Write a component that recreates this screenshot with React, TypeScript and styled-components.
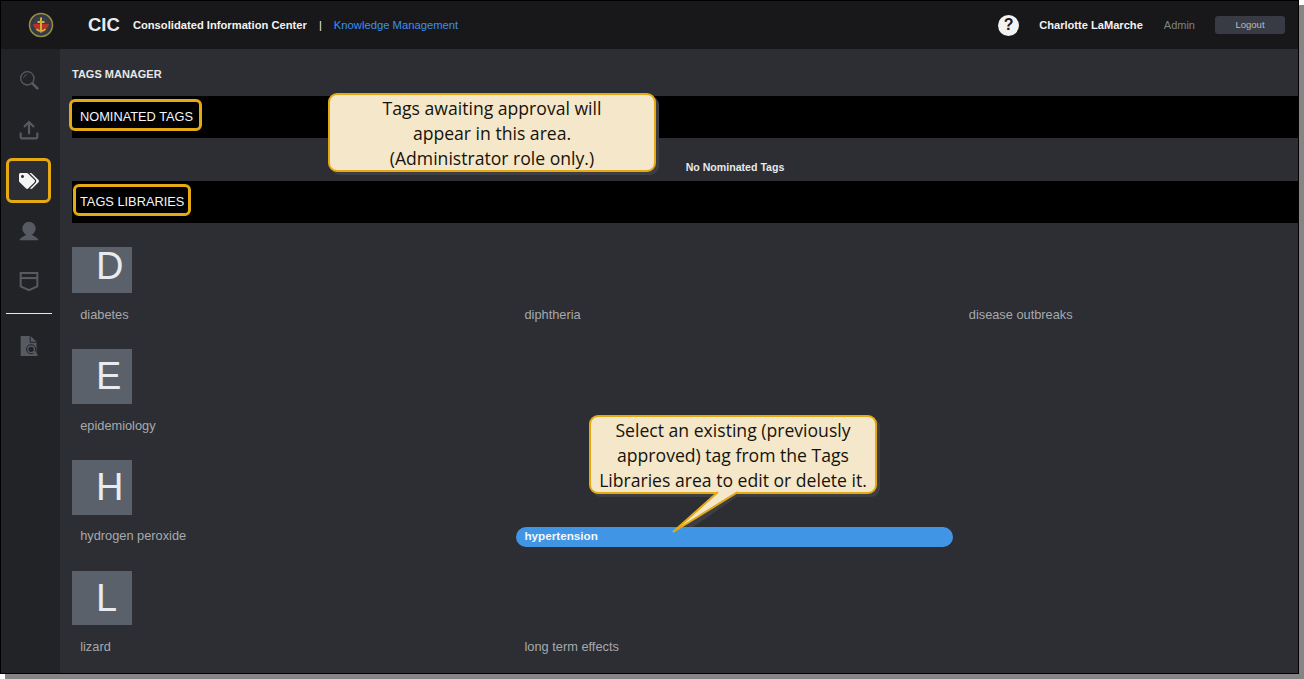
import React from 'react';
import styled, { createGlobalStyle } from 'styled-components';
import { FaTags } from 'react-icons/fa';

const GlobalStyle = createGlobalStyle`
  html, body {
    margin: 0;
    padding: 0;
    background: #ffffff;
    font-family: "Liberation Sans", Arial, sans-serif;
  }
`;

const Page = styled.div`
  position: relative;
  width: 1304px;
  height: 679px;
  overflow: hidden;

  /* the screenshot's drop shadow */
  &::before {
    content: '';
    position: absolute;
    left: 5px;
    top: 5px;
    width: 1299px;
    height: 674px;
    background: #858585;
  }
`;

const Frame = styled.div`
  position: relative;
  box-sizing: border-box;
  width: 1299px;
  height: 674px;
  border: 1px solid #000;
  display: flex;
  flex-direction: column;
`;

const Header = styled.header`
  flex: 0 0 48px;
  background: #18181a;
  display: flex;
  align-items: center;
  color: #f2f2f2;
`;

const Seal = styled.svg`
  width: 26px;
  height: 26px;
  margin-left: 27px;
`;

const Brand = styled.span`
  margin-left: 34px;
  font-size: 18.5px;
  font-weight: 700;
  color: #e8ebef;
`;

const AppName = styled.span`
  margin-left: 13px;
  font-size: 11.2px;
  font-weight: 700;
`;

const Divider = styled.span`
  margin-left: 12px;
  font-size: 11px;
`;

const Module = styled.span`
  margin-left: 12px;
  font-size: 11.25px;
  color: #3b8ff0;
`;

const HeaderRight = styled.div`
  margin-left: auto;
  display: flex;
  align-items: center;
  padding-right: 13px;
`;

const Help = styled.span`
  width: 21px;
  height: 21px;
  border-radius: 50%;
  background: #f2f2f2;
  color: #18181a;
  font-size: 16px;
  font-weight: 700;
  display: flex;
  align-items: center;
  justify-content: center;
`;

const UserName = styled.span`
  margin-left: 20px;
  font-size: 11.1px;
  font-weight: 700;
`;

const Role = styled.span`
  margin-left: 21px;
  font-size: 11px;
  color: #7f8184;
`;

const Logout = styled.button`
  margin-left: 20px;
  width: 70px;
  height: 18px;
  padding: 0 0 1px;
  border: 0;
  border-radius: 3px;
  background: #393b44;
  color: #b9bbbf;
  font-family: inherit;
  font-size: 9.5px;
`;

const Body = styled.div`
  flex: 1;
  min-height: 0;
  display: flex;
`;

const Sidebar = styled.nav`
  flex: 0 0 59px;
  background: #222327;
  display: flex;
  flex-direction: column;
  align-items: center;
  padding: 10px 4px 0 0;
  box-sizing: border-box;
`;

const NavItem = styled.div<{ $active?: boolean }>`
  width: ${p => (p.$active ? '45px' : '44px')};
  height: ${p => (p.$active ? '45px' : '44px')};
  margin: ${p => (p.$active ? '-1px 0 7px' : '0 0 6px')};
  padding-bottom: ${p => (p.$active ? '0' : '2px')};
  box-sizing: border-box;
  border-radius: 6px;
  display: flex;
  align-items: center;
  justify-content: center;
  color: ${p => (p.$active ? '#f4f4f4' : '#575a61')};
  background: ${p => (p.$active ? '#2d2e33' : 'transparent')};
  border: ${p => (p.$active ? '3px solid #e5a913' : '0')};

  svg {
    width: 20px;
    height: 20px;
    display: block;
  }
`;

const NavRule = styled.hr`
  width: 46px;
  height: 1px;
  margin: 3px 0 11px;
  border: 0;
  background: #e8e8e8;
`;

const Main = styled.main`
  flex: 1;
  min-width: 0;
  background: #2d2e33;
  padding: 19px 0 0 12px;
  overflow: hidden;
`;

const PageTitle = styled.h1`
  margin: 0 0 15px;
  font-size: 11px;
  line-height: 13px;
  font-weight: 700;
  color: #e6e8ea;
`;

const SectionBar = styled.div`
  height: 42px;
  padding: 0 0 1px 8px;
  box-sizing: border-box;
  background: #000;
  display: flex;
  align-items: center;
`;

const SectionTitle = styled.h2`
  position: relative;
  margin: 0;
  font-size: 12.8px;
  line-height: 16px;
  font-weight: 400;
  color: #f4f6f8;
`;

const Highlight = styled.span<{ $left: number; $right: number }>`
  position: absolute;
  top: -9.5px;
  bottom: -6.5px;
  left: ${p => p.$left}px;
  right: ${p => p.$right}px;
  border: 3px solid #e5a913;
  border-radius: 6px;
`;

const EmptyNote = styled.div`
  height: 43px;
  display: flex;
  align-items: flex-end;
  justify-content: center;
  padding: 0 0 8px 100px;
  box-sizing: border-box;
  font-size: 10.6px;
  font-weight: 700;
  color: #e8e8e8;
`;

const Letter = styled.div<{ $height: number; $gap: number; $line: number }>`
  width: 60px;
  height: ${p => p.$height}px;
  margin-top: ${p => p.$gap}px;
  background: #5a616a;
  color: #e8ebef;
  font-size: 38px;
  line-height: ${p => p.$line}px;
  padding-left: 24px;
  box-sizing: border-box;
`;

const TagGrid = styled.div<{ $gap: number }>`
  display: grid;
  grid-template-columns: repeat(3, 444.3px);
  margin-top: ${p => p.$gap}px;
`;

const Tag = styled.div`
  width: 437px;
  height: 20px;
  line-height: 20px;
  padding-left: 8.2px;
  box-sizing: border-box;
  font-size: 12.8px;
  color: #a6a9ad;
`;

const SelectedTag = styled(Tag)`
  margin-top: 1px;
  line-height: 17px;
  border-radius: 10px;
  font-size: 11.7px;
  font-weight: 700;
  color: #f2f6fb;
  background: #4095e5;
`;

const Callout = styled.div<{ $x: number; $y: number; $w: number }>`
  position: absolute;
  left: ${p => p.$x}px;
  top: ${p => p.$y}px;
  width: ${p => p.$w}px;
  height: 79px;
  padding-top: 1px;
  box-sizing: border-box;
  border: 2px solid #e5a913;
  border-radius: 9px;
  background: #f5e7c9;
  box-shadow: 3px 3px 0 #3d3e43;
  color: #17130c;
  font-family: "Open Sans", "Noto Sans", sans-serif;
  font-size: 17.6px;
  line-height: 25px;
  text-align: center;
  white-space: nowrap;
  z-index: 2;
`;

const Tail = styled.svg`
  position: absolute;
  left: 667px;
  top: 490px;
  width: 80px;
  height: 48px;
  z-index: 3;
`;

function SealIcon() {
  return (
    <Seal viewBox="0 0 26 26">
      <circle cx="13" cy="13" r="11.500" fill="#2f3a4a" stroke="#9a8f3e" strokeWidth="1.500" />
      <circle cx="13" cy="13" r="8.500" fill="#3c3f3f" />
      <path d="M4.800 12h16.400a8.500 8.500 0 0 1-16.400 0z" fill="#b5342a" />
      <path d="M13 5.500v15M9.500 10h7M8.500 17c2 2.500 7 2.500 9 0" stroke="#d6ad3c" strokeWidth="2" fill="none" />
    </Seal>
  );
}

function SearchIcon() {
  return (
    <svg viewBox="0 0 24 24" fill="none" stroke="currentColor">
      <circle cx="10" cy="10" r="8" strokeWidth="1.600" />
      <path d="M5.500 10a4.500 4.500 0 0 1 4.500-4.500" strokeWidth="1" />
      <path d="M16 16 L22 22" strokeWidth="3.200" strokeLinecap="round" />
    </svg>
  );
}

function UploadIcon() {
  return (
    <svg viewBox="0 0 24 24" fill="none" stroke="currentColor" strokeWidth="2.600">
      <path d="M12 17V3M6 8.500 12 2.500 18 8.500" />
      <path d="M2 15v5.500a1.500 1.500 0 0 0 1.500 1.500h17a1.500 1.500 0 0 0 1.500-1.500V15" />
    </svg>
  );
}

function UserIcon() {
  return (
    <svg viewBox="0 0 24 24" fill="currentColor">
      <circle cx="12" cy="9" r="8" />
      <path d="M9 15h6c.5 3 7 4 8.500 8H.5C2 19 8.500 18 9 15z" />
    </svg>
  );
}

function PocketIcon() {
  return (
    <svg viewBox="0 0 24 24" fill="none" stroke="currentColor" strokeWidth="2.400">
      <path d="M2 2.500h20v16L12 23 2 18.500z" />
      <path d="M2 8.500h20" />
    </svg>
  );
}

function FileSearchIcon() {
  return (
    <svg viewBox="0 0 24 24">
      <path fill="currentColor" d="M2 0H14l7 7v17H2z" />
      <path fill="#222327" d="M14 0v7h7v1.200h-8.200V0z" />
      <circle cx="14.500" cy="16" r="6" fill="#222327" />
      <circle cx="14.500" cy="16" r="4" fill="none" stroke="currentColor" strokeWidth="1.600" />
      <path d="M17.500 19 22 23.500" stroke="currentColor" strokeWidth="2.200" />
    </svg>
  );
}

export default function App() {
  return (
    <Page>
      <GlobalStyle />
      <Frame>
        <Header>
          <SealIcon />
          <Brand>CIC</Brand>
          <AppName>Consolidated Information Center</AppName>
          <Divider>|</Divider>
          <Module>Knowledge Management</Module>
          <HeaderRight>
            <Help>?</Help>
            <UserName>Charlotte LaMarche</UserName>
            <Role>Admin</Role>
            <Logout>Logout</Logout>
          </HeaderRight>
        </Header>
        <Body>
          <Sidebar>
            <NavItem><SearchIcon /></NavItem>
            <NavItem><UploadIcon /></NavItem>
            <NavItem $active><FaTags /></NavItem>
            <NavItem><UserIcon /></NavItem>
            <NavItem><PocketIcon /></NavItem>
            <NavRule />
            <NavItem><FileSearchIcon /></NavItem>
          </Sidebar>
          <Main>
            <PageTitle>TAGS MANAGER</PageTitle>
            <SectionBar>
              <SectionTitle>
                NOMINATED TAGS
                <Highlight $left={-11} $right={-9} />
              </SectionTitle>
            </SectionBar>
            <EmptyNote>No Nominated Tags</EmptyNote>
            <SectionBar>
              <SectionTitle>
                TAGS LIBRARIES
                <Highlight $left={-7} $right={-7} />
              </SectionTitle>
            </SectionBar>

            <Letter $height={46} $gap={24} $line={38}>D</Letter>
            <TagGrid $gap={12}>
              <Tag>diabetes</Tag>
              <Tag>diphtheria</Tag>
              <Tag>disease outbreaks</Tag>
            </TagGrid>

            <Letter $height={55} $gap={24} $line={55}>E</Letter>
            <TagGrid $gap={12}>
              <Tag>epidemiology</Tag>
            </TagGrid>

            <Letter $height={55} $gap={24} $line={55}>H</Letter>
            <TagGrid $gap={11}>
              <Tag>hydrogen peroxide</Tag>
              <SelectedTag>hypertension</SelectedTag>
            </TagGrid>

            <Letter $height={54} $gap={24} $line={55}>L</Letter>
            <TagGrid $gap={12}>
              <Tag>lizard</Tag>
              <Tag>long term effects</Tag>
            </TagGrid>
          </Main>
        </Body>
        <Callout $x={327} $y={92} $w={328}>
          Tags awaiting approval will<br />appear in this area.<br />(Administrator role only.)
        </Callout>
        <Callout $x={588} $y={414} $w={288}>
          Select an existing (previously<br />approved) tag from the Tags<br />Libraries area to edit or delete it.
        </Callout>
        <Tail viewBox="0 0 80 48">
          <path d="M70 3 L12 36 L25 36 L73 3z" fill="#3d3e43" />
          <path d="M50 0 L5 41 L70 0z" fill="#f5e7c9" />
          <path d="M50 1 L5 41 L70 1" fill="none" stroke="#e5a913" strokeWidth="2" />
        </Tail>
      </Frame>
    </Page>
  );
}
